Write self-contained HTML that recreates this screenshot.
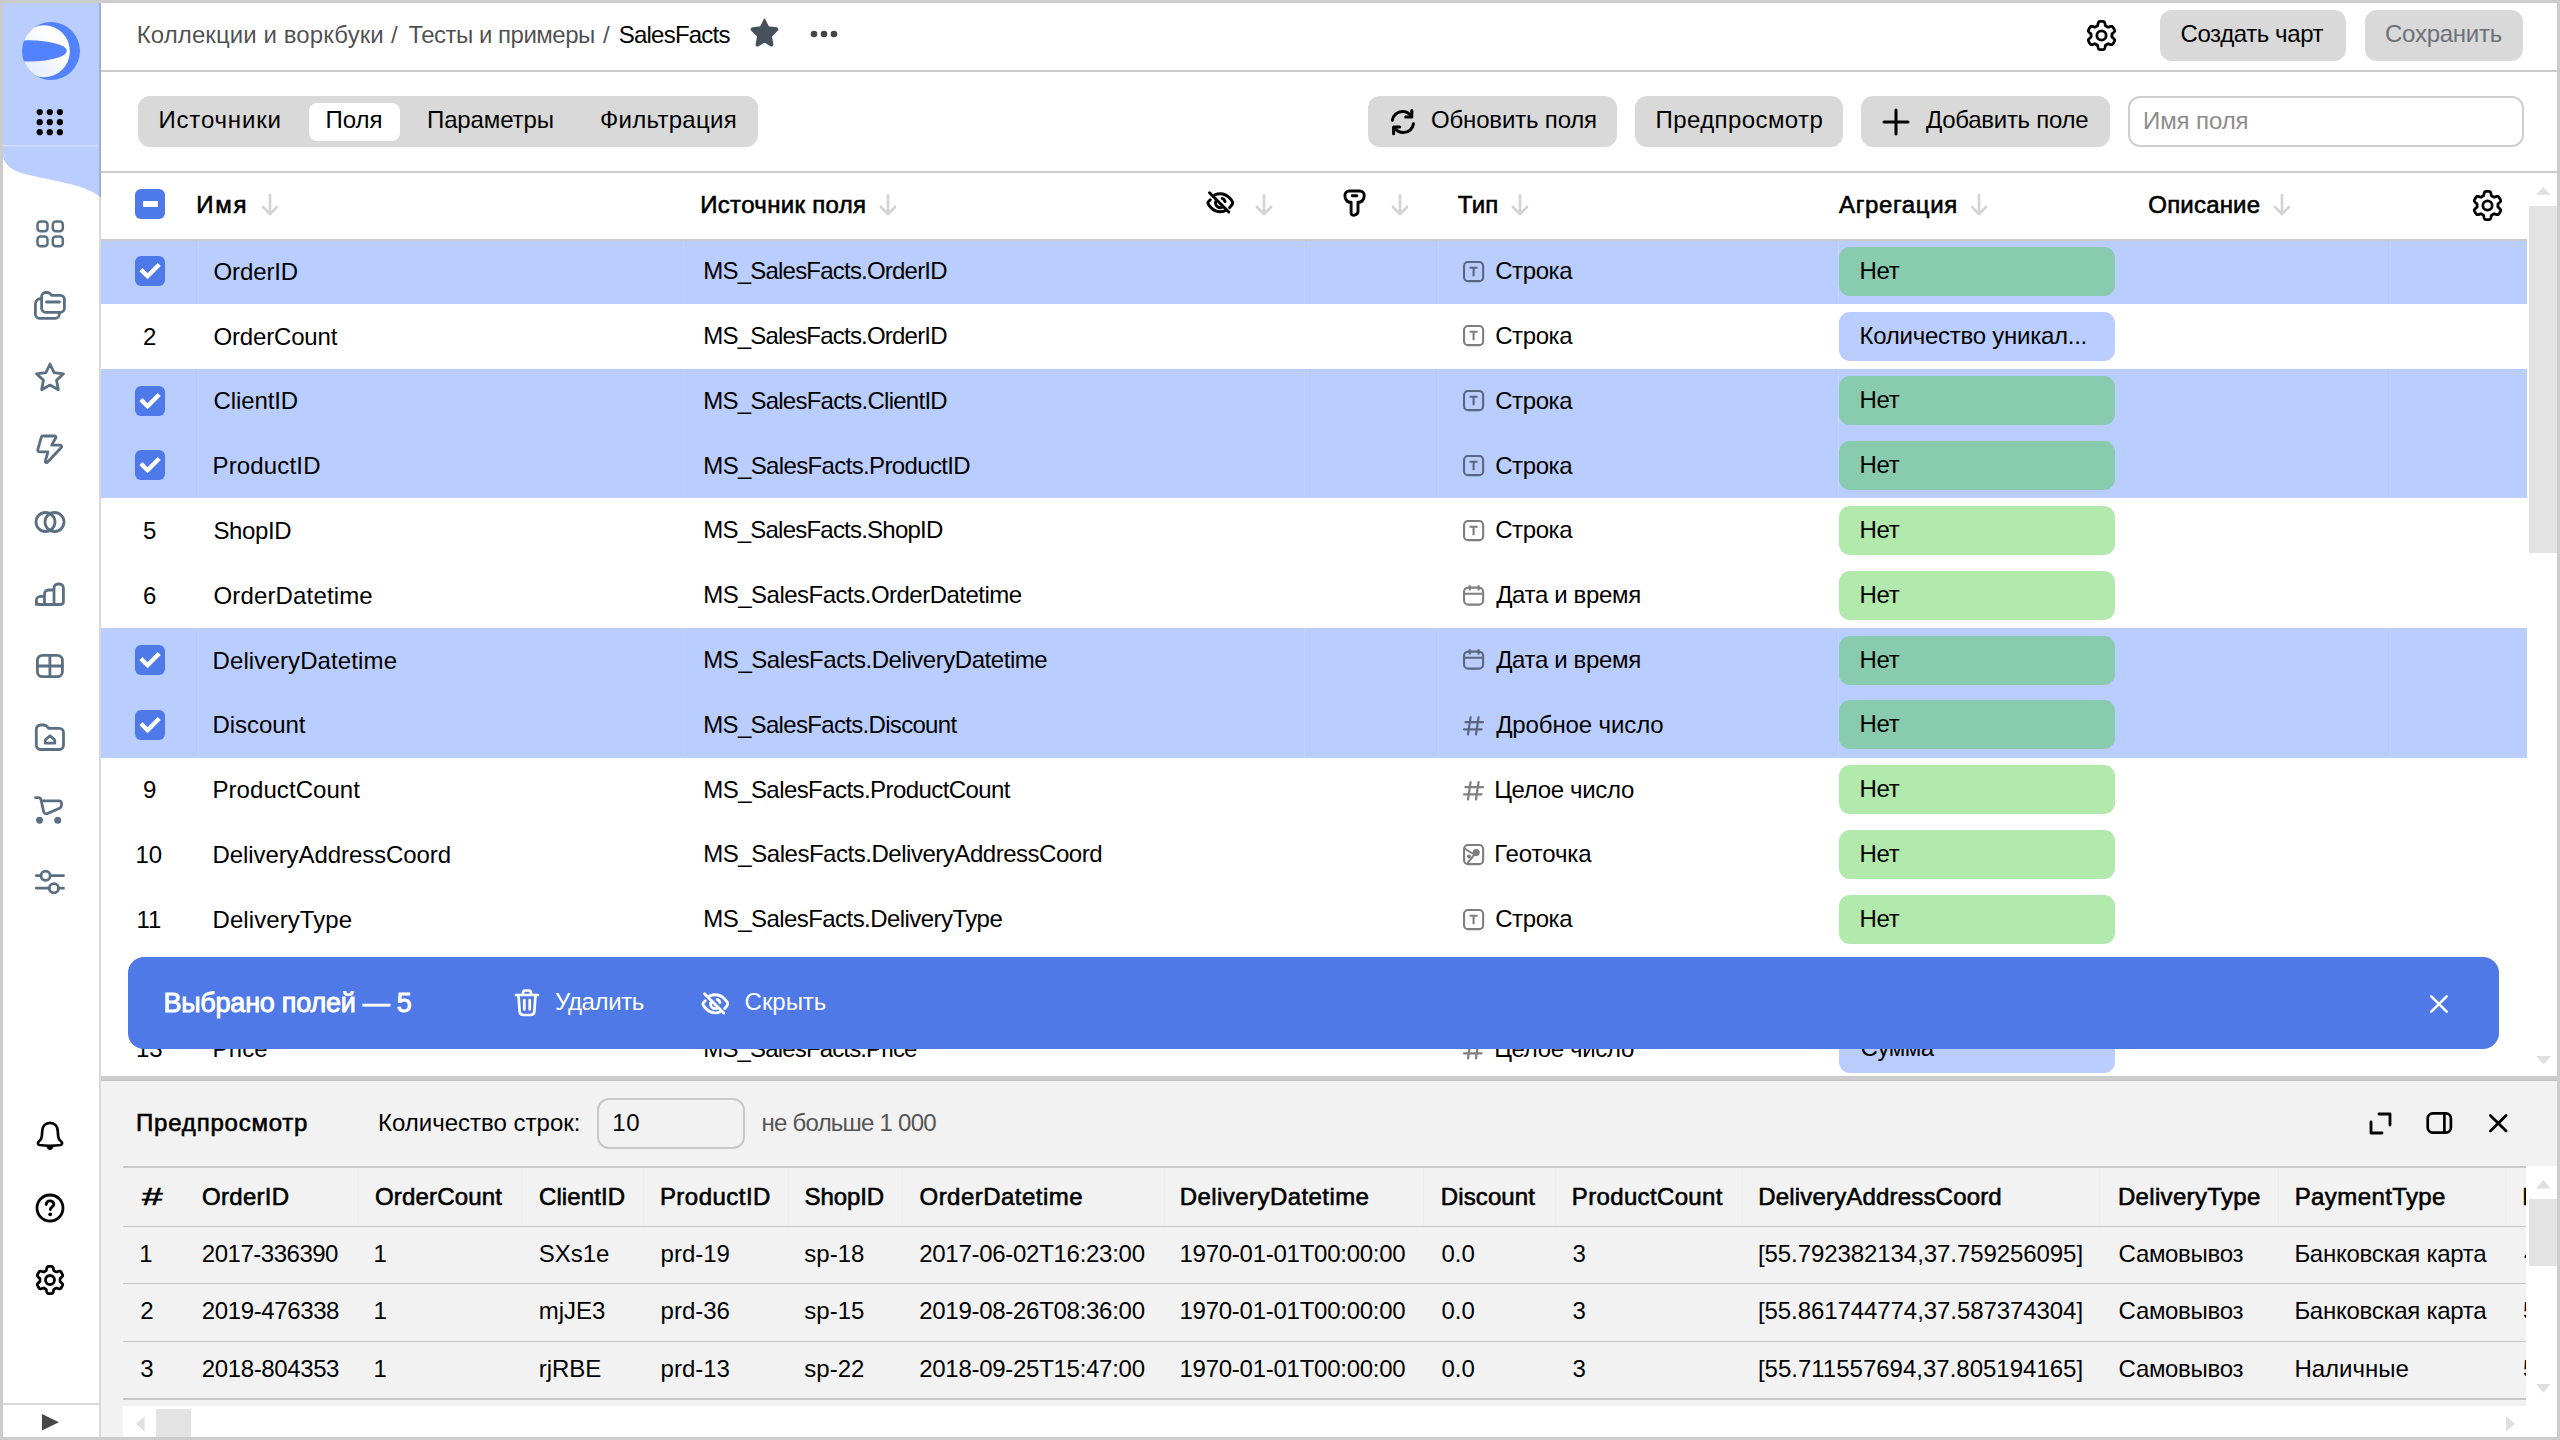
<!DOCTYPE html>
<html><head><meta charset="utf-8"><title>DataLens</title>
<style>
html,body{margin:0;padding:0;width:2560px;height:1440px;overflow:hidden;background:#fff;}
body{position:relative;font-family:"Liberation Sans",sans-serif;}
.a{position:absolute;}
.t{position:absolute;white-space:nowrap;}
svg.a{overflow:visible;}
@media (max-width: 2000px){html{zoom:0.5;}}
</style></head><body>
<svg class="a" style="left:3px;top:3px" width="98" height="200" viewBox="3 3 98 200"><path d="M3 3H101V197.5C93 191.5 84 187.5 72 184.5C58 181 42 178 28 174.8C14 171.8 5 166 3 156.5Z" fill="#bacdff"/><rect x="3" y="145" width="96" height="1.4" fill="#d3ddff"/></svg>
<svg class="a" style="left:22px;top:22px" width="58" height="58" viewBox="22.8 22.5 57.2 57.2"><defs><clipPath id="lc"><circle cx="51.4" cy="51.1" r="28.6"/></clipPath><linearGradient id="lg" x1="0" y1="1" x2="0.75" y2="0.35"><stop offset="0" stop-color="#dfe6fc"/><stop offset="1" stop-color="#ffffff"/></linearGradient></defs><circle cx="51.4" cy="51.1" r="28.6" fill="#5282ff"/><g clip-path="url(#lc)"><circle cx="44.3" cy="51.3" r="25.7" fill="url(#lg)"/><ellipse cx="30" cy="51" rx="37" ry="10.4" fill="#5282ff"/></g></svg>
<svg class="a" style="left:30px;top:102px;" width="40" height="40" viewBox="0 0 40 40"><g fill="#000"><circle cx="9.7" cy="10.1" r="3.1"/><circle cx="19.8" cy="10.1" r="3.1"/><circle cx="29.9" cy="10.1" r="3.1"/><circle cx="9.7" cy="20.2" r="3.1"/><circle cx="19.8" cy="20.2" r="3.1"/><circle cx="29.9" cy="20.2" r="3.1"/><circle cx="9.7" cy="30.2" r="3.1"/><circle cx="19.8" cy="30.2" r="3.1"/><circle cx="29.9" cy="30.2" r="3.1"/></g></svg>
<div class="a" style="left:99px;top:3px;width:2px;height:1434px;background:rgba(0,0,0,0.15);"></div>
<svg class="a" style="left:34px;top:217.5px;" width="32" height="32" viewBox="0 0 32 32"><g fill="none" stroke="#5b6f83" stroke-width="2.8" stroke-linecap="round" stroke-linejoin="round"><g stroke-width="2.5"><rect x="3.5" y="3.6" width="10" height="9.7" rx="3"/><rect x="18.8" y="3.6" width="10" height="9.7" rx="3"/><rect x="3.5" y="18.6" width="10" height="9.7" rx="3"/><rect x="18.8" y="18.6" width="10" height="9.7" rx="3"/></g></g></svg>
<svg class="a" style="left:34px;top:290px;" width="32" height="32" viewBox="0 0 32 32"><g fill="none" stroke="#5b6f83" stroke-width="2.8" stroke-linecap="round" stroke-linejoin="round"><path d="M7.6 8.3C4.2 8.5 1.4 10.5 1.4 14V24.3C1.4 26.5 3.2 28.3 5.4 28.3H21.3C23.5 28.3 25.3 26.5 25.3 24.3V22.3"/><path d="M7.6 19V6.5C7.6 4.3 9.4 2.5 11.6 2.5H13.5C14.6 2.5 15.6 3 16.3 3.9L17.5 5.3H26.4C28.6 5.3 30.4 7.1 30.4 9.3V18.3C30.4 20.5 28.6 22.3 26.4 22.3H11.6C9.4 22.3 7.6 20.5 7.6 18.3Z"/><path d="M12.5 12H25.5"/></g></svg>
<svg class="a" style="left:34px;top:360.5px;" width="32" height="32" viewBox="0 0 32 32"><g fill="none" stroke="#5b6f83" stroke-width="2.8" stroke-linecap="round" stroke-linejoin="round"><path d="M16.00 3.00L20.06 11.62L29.51 12.81L22.56 19.33L24.35 28.69L16.00 24.10L7.65 28.69L9.44 19.33L2.49 12.81L11.94 11.62Z"/></g></svg>
<svg class="a" style="left:34px;top:434px;" width="32" height="32" viewBox="0 0 32 32"><g fill="none" stroke="#5b6f83" stroke-width="2.8" stroke-linecap="round" stroke-linejoin="round"><path d="M8.6 2H20.6C21.6 2 22.2 3 21.8 3.9L17.6 11.2H26.3C27.5 11.2 28.1 12.6 27.3 13.5L13.4 28.2C12.5 29.1 11 28.3 11.3 27.1L13.9 17.8H5.4C4.2 17.8 3.4 16.6 3.8 15.5L7.4 2.9C7.6 2.4 8.1 2 8.6 2Z"/></g></svg>
<svg class="a" style="left:34px;top:505.7px;" width="32" height="32" viewBox="0 0 32 32"><g fill="none" stroke="#5b6f83" stroke-width="2.8" stroke-linecap="round" stroke-linejoin="round"><circle cx="11.5" cy="16" r="9.5"/><circle cx="20.5" cy="16" r="9.5"/></g></svg>
<svg class="a" style="left:34px;top:577.5px;" width="32" height="32" viewBox="0 0 32 32"><g fill="none" stroke="#5b6f83" stroke-width="2.8" stroke-linecap="round" stroke-linejoin="round"><path d="M2.4 26.5V22.2C2.4 20 4.2 18.3 6.4 18.3H10.5V26.5M10.5 26.5V15.9C10.5 13.7 12.3 12 14.5 12H20V26.5M20 26.5V9.9C20 7.7 21.8 6 24 6H25.4C27.6 6 29.4 7.7 29.4 9.9V23.5C29.4 25.2 28.1 26.5 26.4 26.5H5.4C3.7 26.5 2.4 25.2 2.4 23.5"/></g></svg>
<svg class="a" style="left:34px;top:649.6px;" width="32" height="32" viewBox="0 0 32 32"><g fill="none" stroke="#5b6f83" stroke-width="2.8" stroke-linecap="round" stroke-linejoin="round"><rect x="3.4" y="5.3" width="25" height="21.4" rx="5"/><path d="M15.9 5.3V26.7M3.4 16H28.4"/></g></svg>
<svg class="a" style="left:34px;top:721px;" width="32" height="32" viewBox="0 0 32 32"><g fill="none" stroke="#5b6f83" stroke-width="2.8" stroke-linecap="round" stroke-linejoin="round"><path d="M2.3 8.2C2.3 5.9 4.2 4 6.5 4H9.8C11 4 12.1 4.5 12.9 5.4L14.6 7.3H25.3C27.6 7.3 29.5 9.2 29.5 11.5V24.3C29.5 26.6 27.6 28.5 25.3 28.5H6.5C4.2 28.5 2.3 26.6 2.3 24.3Z"/><path d="M11.2 22.2V19.8C11.2 19.3 11.4 18.9 11.8 18.5L16 14.8L20.2 18.5C20.6 18.9 20.8 19.3 20.8 19.8V22.2Z"/></g></svg>
<svg class="a" style="left:34px;top:793.5px;" width="32" height="32" viewBox="0 0 32 32"><g fill="none" stroke="#5b6f83" stroke-width="2.8" stroke-linecap="round" stroke-linejoin="round"><path d="M1.5 3.6H4.5C5.7 3.6 6.7 4.5 7 5.7L9.6 17.5C10 19.3 11.9 20.3 13.6 19.5L25.5 14.2C26.6 13.7 27.5 12.6 27.5 11.3V9.2C27.5 7.9 26.4 6.8 25.1 6.8H7.6"/><circle cx="5.5" cy="26.3" r="2.1" fill="#5b6f83"/><circle cx="23.7" cy="26.3" r="2.1" fill="#5b6f83"/></g></svg>
<svg class="a" style="left:34px;top:865.7px;" width="32" height="32" viewBox="0 0 32 32"><g fill="none" stroke="#5b6f83" stroke-width="2.8" stroke-linecap="round" stroke-linejoin="round"><path d="M2.3 9.7H6.8M16.4 9.7H29.5M2.3 22.2H15.1M24.7 22.2H29.5"/><circle cx="11.6" cy="9.7" r="4.6"/><circle cx="19.9" cy="22.2" r="4.6"/></g></svg>
<svg class="a" style="left:36px;top:1120.5px;" width="28" height="30" viewBox="0 0 28 30"><path d="M14 1.8C9.6 1.8 6.7 5 6.3 9.3L5.8 15.3C5.6 17.6 4.4 19.4 2.6 20.8C1.4 21.8 1.9 23.7 3.4 24C7 24.6 10.5 24.8 14 24.8C17.5 24.8 21 24.6 24.6 24C26.1 23.7 26.6 21.8 25.4 20.8C23.6 19.4 22.4 17.6 22.2 15.3L21.7 9.3C21.3 5 18.4 1.8 14 1.8Z" fill="none" stroke="#000" stroke-width="2.7" stroke-linejoin="round"/><path d="M10.4 25.2C10.8 27.6 12.2 29 14 29C15.8 29 17.2 27.6 17.6 25.2Z" fill="#000"/></svg>
<svg class="a" style="left:35px;top:1193px;" width="30" height="30" viewBox="0 0 30 30"><circle cx="15" cy="15" r="13" fill="none" stroke="#000" stroke-width="2.8"/><path d="M11.2 11.6C11.2 9.4 12.9 7.9 15 7.9C17.2 7.9 18.8 9.4 18.8 11.4C18.8 13.7 15.3 14.2 15.3 16.6" fill="none" stroke="#000" stroke-width="2.9" stroke-linecap="round"/><circle cx="15.2" cy="21.3" r="1.9" fill="#000"/></svg>
<svg class="a" style="left:34.7px;top:1265px;" width="30" height="30" viewBox="0 0 30 30"><path d="M25.06,15.00L25.06,15.18L25.06,15.35L25.05,15.53L25.04,15.70L25.03,15.88L25.01,16.05L25.03,16.23L25.12,16.42L25.27,16.63L25.49,16.85L25.75,17.09L26.04,17.35L26.35,17.62L26.66,17.91L26.96,18.20L27.22,18.51L27.45,18.81L27.61,19.10L27.71,19.38L27.74,19.64L27.70,19.87L27.61,20.09L27.52,20.31L27.42,20.53L27.33,20.75L27.22,20.96L27.12,21.17L27.01,21.38L26.89,21.59L26.78,21.80L26.66,22.00L26.53,22.21L26.41,22.41L26.27,22.61L26.14,22.80L26.00,22.99L25.86,23.18L25.72,23.37L25.57,23.56L25.39,23.72L25.15,23.82L24.86,23.87L24.52,23.88L24.15,23.83L23.75,23.75L23.35,23.64L22.94,23.52L22.55,23.39L22.18,23.26L21.85,23.16L21.55,23.08L21.29,23.05L21.08,23.07L20.92,23.14L20.77,23.24L20.63,23.34L20.48,23.44L20.33,23.53L20.18,23.63L20.03,23.72L19.88,23.80L19.72,23.89L19.57,23.97L19.41,24.05L19.25,24.12L19.09,24.19L18.95,24.30L18.83,24.47L18.73,24.71L18.64,25.01L18.56,25.35L18.49,25.73L18.41,26.14L18.31,26.55L18.20,26.96L18.08,27.34L17.93,27.68L17.76,27.97L17.57,28.20L17.35,28.36L17.13,28.43L16.89,28.47L16.66,28.50L16.42,28.53L16.19,28.55L15.95,28.57L15.71,28.58L15.47,28.59L15.24,28.60L15.00,28.60L14.76,28.60L14.53,28.59L14.29,28.58L14.05,28.57L13.81,28.55L13.58,28.53L13.34,28.50L13.11,28.47L12.87,28.43L12.65,28.36L12.43,28.20L12.24,27.97L12.07,27.68L11.92,27.34L11.80,26.96L11.69,26.55L11.59,26.14L11.51,25.73L11.44,25.35L11.36,25.01L11.27,24.71L11.17,24.47L11.05,24.30L10.91,24.19L10.75,24.12L10.59,24.05L10.43,23.97L10.28,23.89L10.12,23.80L9.97,23.72L9.82,23.63L9.67,23.53L9.52,23.44L9.37,23.34L9.23,23.24L9.08,23.14L8.92,23.07L8.71,23.05L8.45,23.08L8.15,23.16L7.82,23.26L7.45,23.39L7.06,23.52L6.65,23.64L6.25,23.75L5.85,23.83L5.48,23.88L5.14,23.87L4.85,23.82L4.61,23.72L4.43,23.56L4.28,23.37L4.14,23.18L4.00,22.99L3.86,22.80L3.73,22.61L3.59,22.41L3.47,22.21L3.34,22.00L3.22,21.80L3.11,21.59L2.99,21.38L2.88,21.17L2.78,20.96L2.67,20.75L2.58,20.53L2.48,20.31L2.39,20.09L2.30,19.87L2.26,19.64L2.29,19.38L2.39,19.10L2.55,18.81L2.78,18.51L3.04,18.20L3.34,17.91L3.65,17.62L3.96,17.35L4.25,17.09L4.51,16.85L4.73,16.63L4.88,16.42L4.97,16.23L4.99,16.05L4.97,15.88L4.96,15.70L4.95,15.53L4.94,15.35L4.94,15.18L4.94,15.00L4.94,14.82L4.94,14.65L4.95,14.47L4.96,14.30L4.97,14.12L4.99,13.95L4.97,13.77L4.88,13.58L4.73,13.37L4.51,13.15L4.25,12.91L3.96,12.65L3.65,12.38L3.34,12.09L3.04,11.80L2.78,11.49L2.55,11.19L2.39,10.90L2.29,10.62L2.26,10.36L2.30,10.13L2.39,9.91L2.48,9.69L2.58,9.47L2.67,9.25L2.78,9.04L2.88,8.83L2.99,8.62L3.11,8.41L3.22,8.20L3.34,8.00L3.47,7.79L3.59,7.59L3.73,7.39L3.86,7.20L4.00,7.01L4.14,6.82L4.28,6.63L4.43,6.44L4.61,6.28L4.85,6.18L5.14,6.13L5.48,6.12L5.85,6.17L6.25,6.25L6.65,6.36L7.06,6.48L7.45,6.61L7.82,6.74L8.15,6.84L8.45,6.92L8.71,6.95L8.92,6.93L9.08,6.86L9.23,6.76L9.37,6.66L9.52,6.56L9.67,6.47L9.82,6.37L9.97,6.28L10.12,6.20L10.28,6.11L10.43,6.03L10.59,5.95L10.75,5.88L10.91,5.81L11.05,5.70L11.17,5.53L11.27,5.29L11.36,4.99L11.44,4.65L11.51,4.27L11.59,3.86L11.69,3.45L11.80,3.04L11.92,2.66L12.07,2.32L12.24,2.03L12.43,1.80L12.65,1.64L12.87,1.57L13.11,1.53L13.34,1.50L13.58,1.47L13.81,1.45L14.05,1.43L14.29,1.42L14.53,1.41L14.76,1.40L15.00,1.40L15.24,1.40L15.47,1.41L15.71,1.42L15.95,1.43L16.19,1.45L16.42,1.47L16.66,1.50L16.89,1.53L17.13,1.57L17.35,1.64L17.57,1.80L17.76,2.03L17.93,2.32L18.08,2.66L18.20,3.04L18.31,3.45L18.41,3.86L18.49,4.27L18.56,4.65L18.64,4.99L18.73,5.29L18.83,5.53L18.95,5.70L19.09,5.81L19.25,5.88L19.41,5.95L19.57,6.03L19.72,6.11L19.88,6.20L20.03,6.28L20.18,6.37L20.33,6.47L20.48,6.56L20.63,6.66L20.77,6.76L20.92,6.86L21.08,6.93L21.29,6.95L21.55,6.92L21.85,6.84L22.18,6.74L22.55,6.61L22.94,6.48L23.35,6.36L23.75,6.25L24.15,6.17L24.52,6.12L24.86,6.13L25.15,6.18L25.39,6.28L25.57,6.44L25.72,6.63L25.86,6.82L26.00,7.01L26.14,7.20L26.27,7.39L26.41,7.59L26.53,7.79L26.66,8.00L26.78,8.20L26.89,8.41L27.01,8.62L27.12,8.83L27.22,9.04L27.33,9.25L27.42,9.47L27.52,9.69L27.61,9.91L27.70,10.13L27.74,10.36L27.71,10.62L27.61,10.90L27.45,11.19L27.22,11.49L26.96,11.80L26.66,12.09L26.35,12.38L26.04,12.65L25.75,12.91L25.49,13.15L25.27,13.37L25.12,13.58L25.03,13.77L25.01,13.95L25.03,14.12L25.04,14.30L25.05,14.47L25.06,14.65L25.06,14.82Z" fill="none" stroke="#000" stroke-width="2.8" stroke-linejoin="round"/><circle cx="15" cy="15" r="4.5" fill="none" stroke="#000" stroke-width="2.8"/></svg>
<div class="a" style="left:3px;top:1403px;width:96px;height:2px;background:rgba(0,0,0,0.15);"></div>
<svg class="a" style="left:41.7px;top:1413.6px;" width="16.9" height="16.4" viewBox="0 0 16.9 16.4"><path d="M0 0 L16.9 8.2 L0 16.4 Z" fill="#474747"/></svg>
<div class="a" style="left:101px;top:70px;width:2456px;height:2px;background:#cbcbcb;"></div>
<div class="t" style="left:136.75px;top:22.68px;font-size:24px;line-height:24px;color:rgba(0,0,0,0.7);letter-spacing:0.09px;">Коллекции и воркбуки</div>
<div class="t" style="left:391px;top:22.68px;font-size:24px;line-height:24px;color:rgba(0,0,0,0.7);">/</div>
<div class="t" style="left:408.4px;top:22.68px;font-size:24px;line-height:24px;color:rgba(0,0,0,0.7);letter-spacing:-0.5px;">Тесты и примеры</div>
<div class="t" style="left:603px;top:22.68px;font-size:24px;line-height:24px;color:rgba(0,0,0,0.7);">/</div>
<div class="t" style="left:618.8px;top:22.68px;font-size:24px;line-height:24px;color:#000;letter-spacing:-0.79px;">SalesFacts</div>
<svg class="a" style="left:749px;top:17.3px;" width="31" height="30" viewBox="0 0 30 29"><path d="M15 2.2L18.6 9.6L26.6 10.7C27.6 10.9 28 12.1 27.3 12.8L21.4 18.5L22.9 26.4C23.1 27.4 22 28.2 21.1 27.7L15 23.9L8.9 27.7C8 28.2 6.9 27.4 7.1 26.4L8.6 18.5L2.7 12.8C2 12.1 2.4 10.9 3.4 10.7L11.4 9.6Z" fill="#46515d" stroke="#46515d" stroke-width="1.5" stroke-linejoin="round"/></svg>
<svg class="a" style="left:808px;top:29px;" width="32" height="10" viewBox="0 0 32 10"><g fill="#444"><circle cx="6" cy="5" r="3.3"/><circle cx="16" cy="5" r="3.3"/><circle cx="26" cy="5" r="3.3"/></g></svg>
<svg class="a" style="left:2085.5px;top:19.8px;" width="31" height="31" viewBox="0 0 31 31"><path d="M25.93,15.50L25.93,15.68L25.93,15.86L25.92,16.05L25.91,16.23L25.89,16.41L25.88,16.59L25.90,16.78L25.99,16.97L26.15,17.19L26.37,17.42L26.64,17.67L26.94,17.93L27.27,18.22L27.59,18.51L27.90,18.82L28.17,19.13L28.40,19.45L28.58,19.75L28.68,20.04L28.71,20.31L28.66,20.55L28.57,20.78L28.48,21.01L28.38,21.23L28.28,21.46L28.17,21.68L28.06,21.90L27.95,22.12L27.83,22.34L27.71,22.55L27.59,22.76L27.46,22.97L27.33,23.18L27.19,23.38L27.05,23.59L26.91,23.79L26.76,23.99L26.61,24.18L26.46,24.37L26.27,24.54L26.02,24.65L25.72,24.70L25.37,24.70L24.98,24.66L24.57,24.57L24.15,24.46L23.74,24.33L23.33,24.20L22.95,24.07L22.60,23.96L22.29,23.88L22.02,23.85L21.80,23.86L21.63,23.94L21.48,24.05L21.33,24.15L21.18,24.25L21.03,24.35L20.87,24.44L20.72,24.54L20.56,24.63L20.40,24.71L20.24,24.80L20.07,24.88L19.91,24.96L19.74,25.03L19.59,25.14L19.47,25.32L19.36,25.57L19.28,25.87L19.20,26.23L19.12,26.63L19.03,27.05L18.93,27.48L18.82,27.90L18.69,28.29L18.54,28.65L18.36,28.95L18.16,29.19L17.94,29.35L17.71,29.43L17.46,29.46L17.22,29.49L16.97,29.52L16.73,29.55L16.48,29.57L16.24,29.58L15.99,29.59L15.75,29.60L15.50,29.60L15.25,29.60L15.01,29.59L14.76,29.58L14.52,29.57L14.27,29.55L14.03,29.52L13.78,29.49L13.54,29.46L13.29,29.43L13.06,29.35L12.84,29.19L12.64,28.95L12.46,28.65L12.31,28.29L12.18,27.90L12.07,27.48L11.97,27.05L11.88,26.63L11.80,26.23L11.72,25.87L11.64,25.57L11.53,25.32L11.41,25.14L11.26,25.03L11.09,24.96L10.93,24.88L10.76,24.80L10.60,24.71L10.44,24.63L10.28,24.54L10.13,24.44L9.97,24.35L9.82,24.25L9.67,24.15L9.52,24.05L9.37,23.94L9.20,23.86L8.98,23.85L8.71,23.88L8.40,23.96L8.05,24.07L7.67,24.20L7.26,24.33L6.85,24.46L6.43,24.57L6.02,24.66L5.63,24.70L5.28,24.70L4.98,24.65L4.73,24.54L4.54,24.37L4.39,24.18L4.24,23.99L4.09,23.79L3.95,23.59L3.81,23.38L3.67,23.18L3.54,22.97L3.41,22.76L3.29,22.55L3.17,22.34L3.05,22.12L2.94,21.90L2.83,21.68L2.72,21.46L2.62,21.23L2.52,21.01L2.43,20.78L2.34,20.55L2.29,20.31L2.32,20.04L2.42,19.75L2.60,19.45L2.83,19.13L3.10,18.82L3.41,18.51L3.73,18.22L4.06,17.93L4.36,17.67L4.63,17.42L4.85,17.19L5.01,16.97L5.10,16.78L5.12,16.59L5.11,16.41L5.09,16.23L5.08,16.05L5.07,15.86L5.07,15.68L5.07,15.50L5.07,15.32L5.07,15.14L5.08,14.95L5.09,14.77L5.11,14.59L5.12,14.41L5.10,14.22L5.01,14.03L4.85,13.81L4.63,13.58L4.36,13.33L4.06,13.07L3.73,12.78L3.41,12.49L3.10,12.18L2.83,11.87L2.60,11.55L2.42,11.25L2.32,10.96L2.29,10.69L2.34,10.45L2.43,10.22L2.52,9.99L2.62,9.77L2.72,9.54L2.83,9.32L2.94,9.10L3.05,8.88L3.17,8.66L3.29,8.45L3.41,8.24L3.54,8.03L3.67,7.82L3.81,7.62L3.95,7.41L4.09,7.21L4.24,7.01L4.39,6.82L4.54,6.63L4.73,6.46L4.98,6.35L5.28,6.30L5.63,6.30L6.02,6.34L6.43,6.43L6.85,6.54L7.26,6.67L7.67,6.80L8.05,6.93L8.40,7.04L8.71,7.12L8.98,7.15L9.20,7.14L9.37,7.06L9.52,6.95L9.67,6.85L9.82,6.75L9.97,6.65L10.13,6.56L10.28,6.46L10.44,6.37L10.60,6.29L10.76,6.20L10.93,6.12L11.09,6.04L11.26,5.97L11.41,5.86L11.53,5.68L11.64,5.43L11.72,5.13L11.80,4.77L11.88,4.37L11.97,3.95L12.07,3.52L12.18,3.10L12.31,2.71L12.46,2.35L12.64,2.05L12.84,1.81L13.06,1.65L13.29,1.57L13.54,1.54L13.78,1.51L14.03,1.48L14.27,1.45L14.52,1.43L14.76,1.42L15.01,1.41L15.25,1.40L15.50,1.40L15.75,1.40L15.99,1.41L16.24,1.42L16.48,1.43L16.73,1.45L16.97,1.48L17.22,1.51L17.46,1.54L17.71,1.57L17.94,1.65L18.16,1.81L18.36,2.05L18.54,2.35L18.69,2.71L18.82,3.10L18.93,3.52L19.03,3.95L19.12,4.37L19.20,4.77L19.28,5.13L19.36,5.43L19.47,5.68L19.59,5.86L19.74,5.97L19.91,6.04L20.07,6.12L20.24,6.20L20.40,6.29L20.56,6.37L20.72,6.46L20.87,6.56L21.03,6.65L21.18,6.75L21.33,6.85L21.48,6.95L21.63,7.06L21.80,7.14L22.02,7.15L22.29,7.12L22.60,7.04L22.95,6.93L23.33,6.80L23.74,6.67L24.15,6.54L24.57,6.43L24.98,6.34L25.37,6.30L25.72,6.30L26.02,6.35L26.27,6.46L26.46,6.63L26.61,6.82L26.76,7.01L26.91,7.21L27.05,7.41L27.19,7.62L27.33,7.82L27.46,8.03L27.59,8.24L27.71,8.45L27.83,8.66L27.95,8.88L28.06,9.10L28.17,9.32L28.28,9.54L28.38,9.77L28.48,9.99L28.57,10.22L28.66,10.45L28.71,10.69L28.68,10.96L28.58,11.25L28.40,11.55L28.17,11.87L27.90,12.18L27.59,12.49L27.27,12.78L26.94,13.07L26.64,13.33L26.37,13.58L26.15,13.81L25.99,14.03L25.90,14.22L25.88,14.41L25.89,14.59L25.91,14.77L25.92,14.95L25.93,15.14L25.93,15.32Z" fill="none" stroke="#000" stroke-width="2.8" stroke-linejoin="round"/><circle cx="15.5" cy="15.5" r="4.65" fill="none" stroke="#000" stroke-width="2.8"/></svg>
<div class="a" style="left:2160px;top:10px;width:185.5px;height:50.5px;background:#d9d9d9;border-radius:12px;"></div>
<div class="t" style="left:2180.5px;top:21.68px;font-size:24px;line-height:24px;color:#000;letter-spacing:-0.41px;">Создать чарт</div>
<div class="a" style="left:2365px;top:10px;width:158px;height:50.5px;background:#d9d9d9;border-radius:12px;"></div>
<div class="t" style="left:2385px;top:21.68px;font-size:24px;line-height:24px;color:#6e7177;letter-spacing:-0.25px;">Сохранить</div>
<div class="a" style="left:138px;top:96px;width:620px;height:51px;background:#d9d9d9;border-radius:12px;"></div>
<div class="a" style="left:309px;top:102.5px;width:91px;height:38px;background:#fff;border-radius:8px;"></div>
<div class="t" style="left:158.5px;top:107.68px;font-size:24px;line-height:24px;color:#000;letter-spacing:0.81px;">Источники</div>
<div class="t" style="left:325.5px;top:107.68px;font-size:24px;line-height:24px;color:#000;">Поля</div>
<div class="t" style="left:427px;top:107.68px;font-size:24px;line-height:24px;color:#000;letter-spacing:-0.12px;">Параметры</div>
<div class="t" style="left:600px;top:107.68px;font-size:24px;line-height:24px;color:#000;letter-spacing:0.28px;">Фильтрация</div>
<div class="a" style="left:1368px;top:96px;width:249.3px;height:51px;background:#d9d9d9;border-radius:12px;"></div>
<svg class="a" style="left:1390px;top:108.5px;" width="27" height="26" viewBox="0 0 27 26"><g fill="none" stroke="#000" stroke-width="3" stroke-linecap="round" stroke-linejoin="round"><path d="M2.3 11.3C3 6.2 7.2 2.6 12.5 2.6C16.2 2.6 19.2 4.4 21.3 7.3"/><path d="M21.8 1.5V7.9H15.7"/><path d="M23.5 14.8C22.8 19.8 18.6 23.5 13.3 23.5C9.6 23.5 6.6 21.7 4.5 18.8"/><path d="M3.6 24.7V18.1H9.7"/></g></svg>
<div class="t" style="left:1431px;top:107.68px;font-size:24px;line-height:24px;color:#000;letter-spacing:-0.17px;">Обновить поля</div>
<div class="a" style="left:1635.4px;top:96px;width:207.4px;height:51px;background:#d9d9d9;border-radius:12px;"></div>
<div class="t" style="left:1655.6px;top:107.68px;font-size:24px;line-height:24px;color:#000;letter-spacing:0.4px;">Предпросмотр</div>
<div class="a" style="left:1861px;top:96px;width:249px;height:51px;background:#d9d9d9;border-radius:12px;"></div>
<svg class="a" style="left:1882px;top:108px;" width="28" height="28" viewBox="0 0 28 28"><path d="M14 2V26M2 14H26" stroke="#000" stroke-width="3" stroke-linecap="round"/></svg>
<div class="t" style="left:1926px;top:107.68px;font-size:24px;line-height:24px;color:#000;letter-spacing:-0.28px;">Добавить поле</div>
<div class="a" style="left:2128px;top:96px;width:396px;height:51px;background:#fff;border-radius:12px;border:2px solid #cfcfcf;box-sizing:border-box;"></div>
<div class="t" style="left:2143px;top:108.68px;font-size:24px;line-height:24px;color:#8c8c8c;letter-spacing:-0.09px;">Имя поля</div>
<div class="a" style="left:101px;top:171px;width:2456px;height:2px;background:#cbcbcb;"></div>
<div class="a" style="left:135px;top:189px;width:30px;height:30px;background:#4e79e8;border-radius:6px;"></div>
<div class="a" style="left:142.5px;top:201px;width:15px;height:6px;background:#fff;"></div>
<div class="t" style="left:196.3px;top:192.68px;font-size:24px;line-height:24px;color:#000;-webkit-text-stroke:0.6px #000;letter-spacing:1.7px;">Имя</div>
<svg class="a" style="left:260.5px;top:193px;" width="18" height="24" viewBox="0 0 18 24"><path d="M9 2V21M2 14L9 21L16 14" fill="none" stroke="#d3d3d3" stroke-width="2.6" stroke-linecap="round" stroke-linejoin="round"/></svg>
<div class="t" style="left:700.2px;top:192.68px;font-size:24px;line-height:24px;color:#000;-webkit-text-stroke:0.6px #000;letter-spacing:0.33px;">Источник поля</div>
<svg class="a" style="left:879px;top:193px;" width="18" height="24" viewBox="0 0 18 24"><path d="M9 2V21M2 14L9 21L16 14" fill="none" stroke="#d3d3d3" stroke-width="2.6" stroke-linecap="round" stroke-linejoin="round"/></svg>
<svg class="a" style="left:1206px;top:191.2px;" width="29" height="23.5" viewBox="0 0 29 23"><path d="M4.2 8.6C2.7 10 1.9 11.2 1.9 11.6C1.9 13 6.6 20.6 14.3 20.6C16 20.6 17.5 20.3 18.8 19.7M8.9 3.5C10.5 2.8 12.3 2.5 14.3 2.5C22 2.5 26.7 10.1 26.7 11.6C26.7 12.3 25.7 14.2 23.7 16.3M10.6 9.3C9.9 10 9.5 10.8 9.5 11.6C9.5 14.2 11.6 16.4 14.3 16.4C15.3 16.4 16.2 16.1 16.9 15.6M16.2 7.2C17.6 7.8 18.6 9 19 10.3M3.5 1.5L22.8 20.8" fill="none" stroke="#000" stroke-width="3" stroke-linecap="round" stroke-linejoin="round"/></svg>
<svg class="a" style="left:1255px;top:193px;" width="18" height="24" viewBox="0 0 18 24"><path d="M9 2V21M2 14L9 21L16 14" fill="none" stroke="#d3d3d3" stroke-width="2.6" stroke-linecap="round" stroke-linejoin="round"/></svg>
<svg class="a" style="left:1343px;top:189px;" width="23" height="28.5" viewBox="0 0 23 28.5"><path d="M6.2 2H16.8C19.3 2 21.2 4 21.2 6.5C21.2 7.6 21 8.6 20.6 9.6C19.8 11.5 18.3 13.3 16 13.3H15V22.5C15 24.5 13.9 25.5 11.5 26.2C10 26.7 8.1 25.9 8.1 24.3V13.3H7.1C4.7 13.3 3.3 11.5 2.5 9.6C2.1 8.6 1.9 7.6 1.9 6.5C1.9 4 3.8 2 6.2 2Z" fill="none" stroke="#000" stroke-width="2.9" stroke-linejoin="round"/><path d="M9.3 6.7H13.8" stroke="#000" stroke-width="2.9" stroke-linecap="round"/></svg>
<svg class="a" style="left:1391px;top:193px;" width="18" height="24" viewBox="0 0 18 24"><path d="M9 2V21M2 14L9 21L16 14" fill="none" stroke="#d3d3d3" stroke-width="2.6" stroke-linecap="round" stroke-linejoin="round"/></svg>
<div class="t" style="left:1457.8px;top:192.68px;font-size:24px;line-height:24px;color:#000;-webkit-text-stroke:0.6px #000;letter-spacing:0.25px;">Тип</div>
<svg class="a" style="left:1511px;top:193px;" width="18" height="24" viewBox="0 0 18 24"><path d="M9 2V21M2 14L9 21L16 14" fill="none" stroke="#d3d3d3" stroke-width="2.6" stroke-linecap="round" stroke-linejoin="round"/></svg>
<div class="t" style="left:1839.1px;top:192.68px;font-size:24px;line-height:24px;color:#000;-webkit-text-stroke:0.6px #000;letter-spacing:0.61px;">Агрегация</div>
<svg class="a" style="left:1970px;top:193px;" width="18" height="24" viewBox="0 0 18 24"><path d="M9 2V21M2 14L9 21L16 14" fill="none" stroke="#d3d3d3" stroke-width="2.6" stroke-linecap="round" stroke-linejoin="round"/></svg>
<div class="t" style="left:2148.3px;top:192.68px;font-size:24px;line-height:24px;color:#000;-webkit-text-stroke:0.6px #000;letter-spacing:0.19px;">Описание</div>
<svg class="a" style="left:2272.5px;top:193px;" width="18" height="24" viewBox="0 0 18 24"><path d="M9 2V21M2 14L9 21L16 14" fill="none" stroke="#d3d3d3" stroke-width="2.6" stroke-linecap="round" stroke-linejoin="round"/></svg>
<svg class="a" style="left:2471.5px;top:189.5px;" width="31" height="31" viewBox="0 0 31 31"><path d="M25.93,15.50L25.93,15.68L25.93,15.86L25.92,16.05L25.91,16.23L25.89,16.41L25.88,16.59L25.90,16.78L25.99,16.97L26.15,17.19L26.37,17.42L26.64,17.67L26.94,17.93L27.27,18.22L27.59,18.51L27.90,18.82L28.17,19.13L28.40,19.45L28.58,19.75L28.68,20.04L28.71,20.31L28.66,20.55L28.57,20.78L28.48,21.01L28.38,21.23L28.28,21.46L28.17,21.68L28.06,21.90L27.95,22.12L27.83,22.34L27.71,22.55L27.59,22.76L27.46,22.97L27.33,23.18L27.19,23.38L27.05,23.59L26.91,23.79L26.76,23.99L26.61,24.18L26.46,24.37L26.27,24.54L26.02,24.65L25.72,24.70L25.37,24.70L24.98,24.66L24.57,24.57L24.15,24.46L23.74,24.33L23.33,24.20L22.95,24.07L22.60,23.96L22.29,23.88L22.02,23.85L21.80,23.86L21.63,23.94L21.48,24.05L21.33,24.15L21.18,24.25L21.03,24.35L20.87,24.44L20.72,24.54L20.56,24.63L20.40,24.71L20.24,24.80L20.07,24.88L19.91,24.96L19.74,25.03L19.59,25.14L19.47,25.32L19.36,25.57L19.28,25.87L19.20,26.23L19.12,26.63L19.03,27.05L18.93,27.48L18.82,27.90L18.69,28.29L18.54,28.65L18.36,28.95L18.16,29.19L17.94,29.35L17.71,29.43L17.46,29.46L17.22,29.49L16.97,29.52L16.73,29.55L16.48,29.57L16.24,29.58L15.99,29.59L15.75,29.60L15.50,29.60L15.25,29.60L15.01,29.59L14.76,29.58L14.52,29.57L14.27,29.55L14.03,29.52L13.78,29.49L13.54,29.46L13.29,29.43L13.06,29.35L12.84,29.19L12.64,28.95L12.46,28.65L12.31,28.29L12.18,27.90L12.07,27.48L11.97,27.05L11.88,26.63L11.80,26.23L11.72,25.87L11.64,25.57L11.53,25.32L11.41,25.14L11.26,25.03L11.09,24.96L10.93,24.88L10.76,24.80L10.60,24.71L10.44,24.63L10.28,24.54L10.13,24.44L9.97,24.35L9.82,24.25L9.67,24.15L9.52,24.05L9.37,23.94L9.20,23.86L8.98,23.85L8.71,23.88L8.40,23.96L8.05,24.07L7.67,24.20L7.26,24.33L6.85,24.46L6.43,24.57L6.02,24.66L5.63,24.70L5.28,24.70L4.98,24.65L4.73,24.54L4.54,24.37L4.39,24.18L4.24,23.99L4.09,23.79L3.95,23.59L3.81,23.38L3.67,23.18L3.54,22.97L3.41,22.76L3.29,22.55L3.17,22.34L3.05,22.12L2.94,21.90L2.83,21.68L2.72,21.46L2.62,21.23L2.52,21.01L2.43,20.78L2.34,20.55L2.29,20.31L2.32,20.04L2.42,19.75L2.60,19.45L2.83,19.13L3.10,18.82L3.41,18.51L3.73,18.22L4.06,17.93L4.36,17.67L4.63,17.42L4.85,17.19L5.01,16.97L5.10,16.78L5.12,16.59L5.11,16.41L5.09,16.23L5.08,16.05L5.07,15.86L5.07,15.68L5.07,15.50L5.07,15.32L5.07,15.14L5.08,14.95L5.09,14.77L5.11,14.59L5.12,14.41L5.10,14.22L5.01,14.03L4.85,13.81L4.63,13.58L4.36,13.33L4.06,13.07L3.73,12.78L3.41,12.49L3.10,12.18L2.83,11.87L2.60,11.55L2.42,11.25L2.32,10.96L2.29,10.69L2.34,10.45L2.43,10.22L2.52,9.99L2.62,9.77L2.72,9.54L2.83,9.32L2.94,9.10L3.05,8.88L3.17,8.66L3.29,8.45L3.41,8.24L3.54,8.03L3.67,7.82L3.81,7.62L3.95,7.41L4.09,7.21L4.24,7.01L4.39,6.82L4.54,6.63L4.73,6.46L4.98,6.35L5.28,6.30L5.63,6.30L6.02,6.34L6.43,6.43L6.85,6.54L7.26,6.67L7.67,6.80L8.05,6.93L8.40,7.04L8.71,7.12L8.98,7.15L9.20,7.14L9.37,7.06L9.52,6.95L9.67,6.85L9.82,6.75L9.97,6.65L10.13,6.56L10.28,6.46L10.44,6.37L10.60,6.29L10.76,6.20L10.93,6.12L11.09,6.04L11.26,5.97L11.41,5.86L11.53,5.68L11.64,5.43L11.72,5.13L11.80,4.77L11.88,4.37L11.97,3.95L12.07,3.52L12.18,3.10L12.31,2.71L12.46,2.35L12.64,2.05L12.84,1.81L13.06,1.65L13.29,1.57L13.54,1.54L13.78,1.51L14.03,1.48L14.27,1.45L14.52,1.43L14.76,1.42L15.01,1.41L15.25,1.40L15.50,1.40L15.75,1.40L15.99,1.41L16.24,1.42L16.48,1.43L16.73,1.45L16.97,1.48L17.22,1.51L17.46,1.54L17.71,1.57L17.94,1.65L18.16,1.81L18.36,2.05L18.54,2.35L18.69,2.71L18.82,3.10L18.93,3.52L19.03,3.95L19.12,4.37L19.20,4.77L19.28,5.13L19.36,5.43L19.47,5.68L19.59,5.86L19.74,5.97L19.91,6.04L20.07,6.12L20.24,6.20L20.40,6.29L20.56,6.37L20.72,6.46L20.87,6.56L21.03,6.65L21.18,6.75L21.33,6.85L21.48,6.95L21.63,7.06L21.80,7.14L22.02,7.15L22.29,7.12L22.60,7.04L22.95,6.93L23.33,6.80L23.74,6.67L24.15,6.54L24.57,6.43L24.98,6.34L25.37,6.30L25.72,6.30L26.02,6.35L26.27,6.46L26.46,6.63L26.61,6.82L26.76,7.01L26.91,7.21L27.05,7.41L27.19,7.62L27.33,7.82L27.46,8.03L27.59,8.24L27.71,8.45L27.83,8.66L27.95,8.88L28.06,9.10L28.17,9.32L28.28,9.54L28.38,9.77L28.48,9.99L28.57,10.22L28.66,10.45L28.71,10.69L28.68,10.96L28.58,11.25L28.40,11.55L28.17,11.87L27.90,12.18L27.59,12.49L27.27,12.78L26.94,13.07L26.64,13.33L26.37,13.58L26.15,13.81L25.99,14.03L25.90,14.22L25.88,14.41L25.89,14.59L25.91,14.77L25.92,14.95L25.93,15.14L25.93,15.32Z" fill="none" stroke="#000" stroke-width="2.8" stroke-linejoin="round"/><circle cx="15.5" cy="15.5" r="4.65" fill="none" stroke="#000" stroke-width="2.8"/></svg>
<div class="a" style="left:101px;top:238.5px;width:2426px;height:2px;background:#cbcbcb;"></div>
<svg class="a" style="left:2536px;top:187.2px;" width="14.5" height="7.8" viewBox="0 0 14.5 7.8"><path d="M0 7.8 L7.25 0 L14.5 7.8 Z" fill="#e0e0e0"/></svg>
<div class="a" style="left:2529px;top:206px;width:28px;height:346.8px;background:#e3e3e3;"></div>
<svg class="a" style="left:2536px;top:1056px;" width="15" height="8.5" viewBox="0 0 15 8.5"><path d="M0 0 L7.5 8.5 L15 0 Z" fill="#e0e0e0"/></svg>
<div class="a" style="left:101px;top:240.5px;width:2426px;height:835.5px;overflow:hidden">
<div class="a" style="left:-101px;top:-240.5px;width:2560px;height:1440px"><div class="a" style="left:100px;top:241px;width:2427px;height:63px;background:#bacdff;"></div><div class="a" style="left:135px;top:256px;width:30px;height:30px;background:#4e79e8;border-radius:6px;"></div><svg class="a" style="left:135px;top:256px;" width="30" height="30" viewBox="0 0 30 30"><path d="M7.5 15.2L12.6 20.2L22.7 10" fill="none" stroke="#fff" stroke-width="4.4" stroke-linecap="square" stroke-linejoin="miter"/></svg><div class="t" style="left:213.5px;top:259.78px;font-size:24px;line-height:24px;color:#000;letter-spacing:-0.12px;">OrderID</div><div class="t" style="left:703.3px;top:259.28px;font-size:24px;line-height:24px;color:#000;letter-spacing:-0.79px;">MS_SalesFacts.OrderID</div><svg class="a" style="left:1463.2px;top:260.5px;" width="21.2" height="21.2" viewBox="0 0 21.2 21.2"><g opacity="0.5"><rect x="1.05" y="1.05" width="19.1" height="19.1" rx="4" fill="none" stroke="#000" stroke-width="2.1"/><path d="M6.6 6.7H14.6M10.6 6.7V15.2" fill="none" stroke="#000" stroke-width="2.1"/></g></svg><div class="t" style="left:1495.2px;top:259.28px;font-size:24px;line-height:24px;color:#000;letter-spacing:-0.4px;">Строка</div><div class="a" style="left:1839px;top:246.8px;width:276.4px;height:49.1px;background:#89cbae;border-radius:11px;"></div><div class="t" style="left:1859.6px;top:258.78px;font-size:24px;line-height:24px;color:#000;letter-spacing:-0.4px;">Нет</div><div class="t" style="left:143px;top:324.58px;font-size:24px;line-height:24px;color:#000;">2</div><div class="t" style="left:213.5px;top:324.58px;font-size:24px;line-height:24px;color:#000;letter-spacing:-0.17px;">OrderCount</div><div class="t" style="left:703.3px;top:324.08px;font-size:24px;line-height:24px;color:#000;letter-spacing:-0.79px;">MS_SalesFacts.OrderID</div><svg class="a" style="left:1463.2px;top:325.3px;" width="21.2" height="21.2" viewBox="0 0 21.2 21.2"><g opacity="0.5"><rect x="1.05" y="1.05" width="19.1" height="19.1" rx="4" fill="none" stroke="#000" stroke-width="2.1"/><path d="M6.6 6.7H14.6M10.6 6.7V15.2" fill="none" stroke="#000" stroke-width="2.1"/></g></svg><div class="t" style="left:1495.2px;top:324.08px;font-size:24px;line-height:24px;color:#000;letter-spacing:-0.4px;">Строка</div><div class="a" style="left:1839px;top:311.6px;width:276.4px;height:49.1px;background:#bacdff;border-radius:11px;"></div><div class="t" style="left:1859.6px;top:323.58px;font-size:24px;line-height:24px;color:#000;letter-spacing:-0.26px;">Количество уникал...</div><div class="a" style="left:100px;top:369px;width:2427px;height:65px;background:#bacdff;"></div><div class="a" style="left:100px;top:434px;width:2427px;height:1px;background:rgba(255,255,255,0.12);"></div><div class="a" style="left:135px;top:386px;width:30px;height:30px;background:#4e79e8;border-radius:6px;"></div><svg class="a" style="left:135px;top:386px;" width="30" height="30" viewBox="0 0 30 30"><path d="M7.5 15.2L12.6 20.2L22.7 10" fill="none" stroke="#fff" stroke-width="4.4" stroke-linecap="square" stroke-linejoin="miter"/></svg><div class="t" style="left:213.5px;top:389.38px;font-size:24px;line-height:24px;color:#000;letter-spacing:-0.11px;">ClientID</div><div class="t" style="left:703.3px;top:388.88px;font-size:24px;line-height:24px;color:#000;letter-spacing:-0.75px;">MS_SalesFacts.ClientID</div><svg class="a" style="left:1463.2px;top:390.1px;" width="21.2" height="21.2" viewBox="0 0 21.2 21.2"><g opacity="0.5"><rect x="1.05" y="1.05" width="19.1" height="19.1" rx="4" fill="none" stroke="#000" stroke-width="2.1"/><path d="M6.6 6.7H14.6M10.6 6.7V15.2" fill="none" stroke="#000" stroke-width="2.1"/></g></svg><div class="t" style="left:1495.2px;top:388.88px;font-size:24px;line-height:24px;color:#000;letter-spacing:-0.4px;">Строка</div><div class="a" style="left:1839px;top:376.4px;width:276.4px;height:49.1px;background:#89cbae;border-radius:11px;"></div><div class="t" style="left:1859.6px;top:388.38px;font-size:24px;line-height:24px;color:#000;letter-spacing:-0.4px;">Нет</div><div class="a" style="left:100px;top:434px;width:2427px;height:64px;background:#bacdff;"></div><div class="a" style="left:135px;top:450px;width:30px;height:30px;background:#4e79e8;border-radius:6px;"></div><svg class="a" style="left:135px;top:450px;" width="30" height="30" viewBox="0 0 30 30"><path d="M7.5 15.2L12.6 20.2L22.7 10" fill="none" stroke="#fff" stroke-width="4.4" stroke-linecap="square" stroke-linejoin="miter"/></svg><div class="t" style="left:212.5px;top:454.18px;font-size:24px;line-height:24px;color:#000;letter-spacing:0.16px;">ProductID</div><div class="t" style="left:703.3px;top:453.68px;font-size:24px;line-height:24px;color:#000;letter-spacing:-0.64px;">MS_SalesFacts.ProductID</div><svg class="a" style="left:1463.2px;top:454.9px;" width="21.2" height="21.2" viewBox="0 0 21.2 21.2"><g opacity="0.5"><rect x="1.05" y="1.05" width="19.1" height="19.1" rx="4" fill="none" stroke="#000" stroke-width="2.1"/><path d="M6.6 6.7H14.6M10.6 6.7V15.2" fill="none" stroke="#000" stroke-width="2.1"/></g></svg><div class="t" style="left:1495.2px;top:453.68px;font-size:24px;line-height:24px;color:#000;letter-spacing:-0.4px;">Строка</div><div class="a" style="left:1839px;top:441.2px;width:276.4px;height:49.1px;background:#89cbae;border-radius:11px;"></div><div class="t" style="left:1859.6px;top:453.18px;font-size:24px;line-height:24px;color:#000;letter-spacing:-0.4px;">Нет</div><div class="t" style="left:143px;top:518.98px;font-size:24px;line-height:24px;color:#000;">5</div><div class="t" style="left:213.5px;top:518.98px;font-size:24px;line-height:24px;color:#000;letter-spacing:-0.4px;">ShopID</div><div class="t" style="left:703.3px;top:518.48px;font-size:24px;line-height:24px;color:#000;letter-spacing:-0.78px;">MS_SalesFacts.ShopID</div><svg class="a" style="left:1463.2px;top:519.7px;" width="21.2" height="21.2" viewBox="0 0 21.2 21.2"><g opacity="0.5"><rect x="1.05" y="1.05" width="19.1" height="19.1" rx="4" fill="none" stroke="#000" stroke-width="2.1"/><path d="M6.6 6.7H14.6M10.6 6.7V15.2" fill="none" stroke="#000" stroke-width="2.1"/></g></svg><div class="t" style="left:1495.2px;top:518.48px;font-size:24px;line-height:24px;color:#000;letter-spacing:-0.4px;">Строка</div><div class="a" style="left:1839px;top:506px;width:276.4px;height:49.1px;background:#b2e9ad;border-radius:11px;"></div><div class="t" style="left:1859.6px;top:517.98px;font-size:24px;line-height:24px;color:#000;letter-spacing:-0.4px;">Нет</div><div class="t" style="left:143px;top:583.78px;font-size:24px;line-height:24px;color:#000;">6</div><div class="t" style="left:213.5px;top:583.78px;font-size:24px;line-height:24px;color:#000;letter-spacing:0.15px;">OrderDatetime</div><div class="t" style="left:703.3px;top:583.28px;font-size:24px;line-height:24px;color:#000;letter-spacing:-0.51px;">MS_SalesFacts.OrderDatetime</div><svg class="a" style="left:1463.2px;top:584.5px;" width="21.2" height="21.2" viewBox="0 0 21.2 21.2"><g opacity="0.5"><rect x="1.05" y="2.6" width="19.1" height="17" rx="4.2" fill="none" stroke="#000" stroke-width="2.1"/><path d="M1.5 8.7H19.7M6.8 0.2V5.5M15.6 0.2V5.5" fill="none" stroke="#000" stroke-width="2.1"/></g></svg><div class="t" style="left:1496.2px;top:583.28px;font-size:24px;line-height:24px;color:#000;letter-spacing:-0.35px;">Дата и время</div><div class="a" style="left:1839px;top:570.8px;width:276.4px;height:49.1px;background:#b2e9ad;border-radius:11px;"></div><div class="t" style="left:1859.6px;top:582.78px;font-size:24px;line-height:24px;color:#000;letter-spacing:-0.4px;">Нет</div><div class="a" style="left:100px;top:628px;width:2427px;height:65px;background:#bacdff;"></div><div class="a" style="left:100px;top:693px;width:2427px;height:1px;background:rgba(255,255,255,0.12);"></div><div class="a" style="left:135px;top:645px;width:30px;height:30px;background:#4e79e8;border-radius:6px;"></div><svg class="a" style="left:135px;top:645px;" width="30" height="30" viewBox="0 0 30 30"><path d="M7.5 15.2L12.6 20.2L22.7 10" fill="none" stroke="#fff" stroke-width="4.4" stroke-linecap="square" stroke-linejoin="miter"/></svg><div class="t" style="left:212.5px;top:648.58px;font-size:24px;line-height:24px;color:#000;letter-spacing:0.12px;">DeliveryDatetime</div><div class="t" style="left:703.3px;top:648.08px;font-size:24px;line-height:24px;color:#000;letter-spacing:-0.45px;">MS_SalesFacts.DeliveryDatetime</div><svg class="a" style="left:1463.2px;top:649.3px;" width="21.2" height="21.2" viewBox="0 0 21.2 21.2"><g opacity="0.5"><rect x="1.05" y="2.6" width="19.1" height="17" rx="4.2" fill="none" stroke="#000" stroke-width="2.1"/><path d="M1.5 8.7H19.7M6.8 0.2V5.5M15.6 0.2V5.5" fill="none" stroke="#000" stroke-width="2.1"/></g></svg><div class="t" style="left:1496.2px;top:648.08px;font-size:24px;line-height:24px;color:#000;letter-spacing:-0.35px;">Дата и время</div><div class="a" style="left:1839px;top:635.6px;width:276.4px;height:49.1px;background:#89cbae;border-radius:11px;"></div><div class="t" style="left:1859.6px;top:647.58px;font-size:24px;line-height:24px;color:#000;letter-spacing:-0.4px;">Нет</div><div class="a" style="left:100px;top:693px;width:2427px;height:65px;background:#bacdff;"></div><div class="a" style="left:135px;top:710px;width:30px;height:30px;background:#4e79e8;border-radius:6px;"></div><svg class="a" style="left:135px;top:710px;" width="30" height="30" viewBox="0 0 30 30"><path d="M7.5 15.2L12.6 20.2L22.7 10" fill="none" stroke="#fff" stroke-width="4.4" stroke-linecap="square" stroke-linejoin="miter"/></svg><div class="t" style="left:212.5px;top:713.38px;font-size:24px;line-height:24px;color:#000;letter-spacing:-0.07px;">Discount</div><div class="t" style="left:703.3px;top:712.88px;font-size:24px;line-height:24px;color:#000;letter-spacing:-0.68px;">MS_SalesFacts.Discount</div><svg class="a" style="left:1463.2px;top:714.1px;" width="21.2" height="21.2" viewBox="0 0 21.2 21.2"><g opacity="0.5"><path d="M7.6 3L5 20.5M15.6 3L13 20.5M2.5 8.2H20M1 15.3H18.6" fill="none" stroke="#000" stroke-width="2.2" stroke-linecap="round"/></g></svg><div class="t" style="left:1496.2px;top:712.88px;font-size:24px;line-height:24px;color:#000;letter-spacing:-0.11px;">Дробное число</div><div class="a" style="left:1839px;top:700.4px;width:276.4px;height:49.1px;background:#89cbae;border-radius:11px;"></div><div class="t" style="left:1859.6px;top:712.38px;font-size:24px;line-height:24px;color:#000;letter-spacing:-0.4px;">Нет</div><div class="t" style="left:143px;top:778.18px;font-size:24px;line-height:24px;color:#000;">9</div><div class="t" style="left:212.5px;top:778.18px;font-size:24px;line-height:24px;color:#000;letter-spacing:0.06px;">ProductCount</div><div class="t" style="left:703.3px;top:777.68px;font-size:24px;line-height:24px;color:#000;letter-spacing:-0.57px;">MS_SalesFacts.ProductCount</div><svg class="a" style="left:1463.2px;top:778.9px;" width="21.2" height="21.2" viewBox="0 0 21.2 21.2"><g opacity="0.5"><path d="M7.6 3L5 20.5M15.6 3L13 20.5M2.5 8.2H20M1 15.3H18.6" fill="none" stroke="#000" stroke-width="2.2" stroke-linecap="round"/></g></svg><div class="t" style="left:1494.2px;top:777.68px;font-size:24px;line-height:24px;color:#000;letter-spacing:-0.34px;">Целое число</div><div class="a" style="left:1839px;top:765.2px;width:276.4px;height:49.1px;background:#b2e9ad;border-radius:11px;"></div><div class="t" style="left:1859.6px;top:777.18px;font-size:24px;line-height:24px;color:#000;letter-spacing:-0.4px;">Нет</div><div class="t" style="left:135.5px;top:842.98px;font-size:24px;line-height:24px;color:#000;">10</div><div class="t" style="left:212.5px;top:842.98px;font-size:24px;line-height:24px;color:#000;letter-spacing:-0.08px;">DeliveryAddressCoord</div><div class="t" style="left:703.3px;top:842.48px;font-size:24px;line-height:24px;color:#000;letter-spacing:-0.47px;">MS_SalesFacts.DeliveryAddressCoord</div><svg class="a" style="left:1463.2px;top:843.7px;" width="21.2" height="21.2" viewBox="0 0 21.2 21.2"><g opacity="0.5"><rect x="1.05" y="1.05" width="19.1" height="19.1" rx="4" fill="none" stroke="#000" stroke-width="2.1"/><circle cx="13.2" cy="8.6" r="3.6" fill="#000"/><circle cx="6" cy="12.6" r="2" fill="#000"/><path d="M1.5 4.5L12 11M13.5 8L4 20" fill="none" stroke="#000" stroke-width="2"/></g></svg><div class="t" style="left:1494.2px;top:842.48px;font-size:24px;line-height:24px;color:#000;letter-spacing:-0.07px;">Геоточка</div><div class="a" style="left:1839px;top:830px;width:276.4px;height:49.1px;background:#b2e9ad;border-radius:11px;"></div><div class="t" style="left:1859.6px;top:841.98px;font-size:24px;line-height:24px;color:#000;letter-spacing:-0.4px;">Нет</div><div class="t" style="left:136.5px;top:907.78px;font-size:24px;line-height:24px;color:#000;">11</div><div class="t" style="left:212.5px;top:907.78px;font-size:24px;line-height:24px;color:#000;letter-spacing:0.08px;">DeliveryType</div><div class="t" style="left:703.3px;top:907.28px;font-size:24px;line-height:24px;color:#000;letter-spacing:-0.56px;">MS_SalesFacts.DeliveryType</div><svg class="a" style="left:1463.2px;top:908.5px;" width="21.2" height="21.2" viewBox="0 0 21.2 21.2"><g opacity="0.5"><rect x="1.05" y="1.05" width="19.1" height="19.1" rx="4" fill="none" stroke="#000" stroke-width="2.1"/><path d="M6.6 6.7H14.6M10.6 6.7V15.2" fill="none" stroke="#000" stroke-width="2.1"/></g></svg><div class="t" style="left:1495.2px;top:907.28px;font-size:24px;line-height:24px;color:#000;letter-spacing:-0.4px;">Строка</div><div class="a" style="left:1839px;top:894.8px;width:276.4px;height:49.1px;background:#b2e9ad;border-radius:11px;"></div><div class="t" style="left:1859.6px;top:906.78px;font-size:24px;line-height:24px;color:#000;letter-spacing:-0.4px;">Нет</div><div class="t" style="left:136px;top:972.58px;font-size:24px;line-height:24px;color:#000;">12</div><div class="t" style="left:212.5px;top:972.58px;font-size:24px;line-height:24px;color:#000;letter-spacing:-0.35px;">PaymentType</div><div class="t" style="left:703.3px;top:972.08px;font-size:24px;line-height:24px;color:#000;letter-spacing:-0.76px;">MS_SalesFacts.PaymentType</div><svg class="a" style="left:1463.2px;top:973.3px;" width="21.2" height="21.2" viewBox="0 0 21.2 21.2"><g opacity="0.5"><rect x="1.05" y="1.05" width="19.1" height="19.1" rx="4" fill="none" stroke="#000" stroke-width="2.1"/><path d="M6.6 6.7H14.6M10.6 6.7V15.2" fill="none" stroke="#000" stroke-width="2.1"/></g></svg><div class="t" style="left:1495.2px;top:972.08px;font-size:24px;line-height:24px;color:#000;letter-spacing:-0.4px;">Строка</div><div class="a" style="left:1839px;top:959.6px;width:276.4px;height:49.1px;background:#b2e9ad;border-radius:11px;"></div><div class="t" style="left:1859.6px;top:971.58px;font-size:24px;line-height:24px;color:#000;letter-spacing:-0.4px;">Нет</div><div class="t" style="left:136px;top:1037.38px;font-size:24px;line-height:24px;color:#000;">13</div><div class="t" style="left:212.5px;top:1037.38px;font-size:24px;line-height:24px;color:#000;letter-spacing:0.12px;">Price</div><div class="t" style="left:703.3px;top:1036.88px;font-size:24px;line-height:24px;color:#000;letter-spacing:-0.85px;">MS_SalesFacts.Price</div><svg class="a" style="left:1463.2px;top:1038.1px;" width="21.2" height="21.2" viewBox="0 0 21.2 21.2"><g opacity="0.5"><path d="M7.6 3L5 20.5M15.6 3L13 20.5M2.5 8.2H20M1 15.3H18.6" fill="none" stroke="#000" stroke-width="2.2" stroke-linecap="round"/></g></svg><div class="t" style="left:1494.2px;top:1036.88px;font-size:24px;line-height:24px;color:#000;letter-spacing:-0.34px;">Целое число</div><div class="a" style="left:1839px;top:1024.4px;width:276.4px;height:49.1px;background:#bacdff;border-radius:11px;"></div><div class="t" style="left:1860.6px;top:1036.38px;font-size:24px;line-height:24px;color:#000;letter-spacing:-0.45px;">Сумма</div><div class="a" style="left:198px;top:241px;width:1px;height:63px;background:rgba(255,255,255,0.13);"></div><div class="a" style="left:683px;top:241px;width:1px;height:63px;background:rgba(255,255,255,0.13);"></div><div class="a" style="left:1304px;top:241px;width:1px;height:63px;background:rgba(255,255,255,0.13);"></div><div class="a" style="left:1438px;top:241px;width:1px;height:63px;background:rgba(255,255,255,0.13);"></div><div class="a" style="left:1838px;top:241px;width:1px;height:63px;background:rgba(255,255,255,0.13);"></div><div class="a" style="left:2390px;top:241px;width:1px;height:63px;background:rgba(255,255,255,0.13);"></div><div class="a" style="left:198px;top:369px;width:1px;height:65px;background:rgba(255,255,255,0.13);"></div><div class="a" style="left:683px;top:369px;width:1px;height:65px;background:rgba(255,255,255,0.13);"></div><div class="a" style="left:1304px;top:369px;width:1px;height:65px;background:rgba(255,255,255,0.13);"></div><div class="a" style="left:1438px;top:369px;width:1px;height:65px;background:rgba(255,255,255,0.13);"></div><div class="a" style="left:1838px;top:369px;width:1px;height:65px;background:rgba(255,255,255,0.13);"></div><div class="a" style="left:2390px;top:369px;width:1px;height:65px;background:rgba(255,255,255,0.13);"></div><div class="a" style="left:198px;top:434px;width:1px;height:64px;background:rgba(255,255,255,0.13);"></div><div class="a" style="left:683px;top:434px;width:1px;height:64px;background:rgba(255,255,255,0.13);"></div><div class="a" style="left:1304px;top:434px;width:1px;height:64px;background:rgba(255,255,255,0.13);"></div><div class="a" style="left:1438px;top:434px;width:1px;height:64px;background:rgba(255,255,255,0.13);"></div><div class="a" style="left:1838px;top:434px;width:1px;height:64px;background:rgba(255,255,255,0.13);"></div><div class="a" style="left:2390px;top:434px;width:1px;height:64px;background:rgba(255,255,255,0.13);"></div><div class="a" style="left:198px;top:628px;width:1px;height:65px;background:rgba(255,255,255,0.13);"></div><div class="a" style="left:683px;top:628px;width:1px;height:65px;background:rgba(255,255,255,0.13);"></div><div class="a" style="left:1304px;top:628px;width:1px;height:65px;background:rgba(255,255,255,0.13);"></div><div class="a" style="left:1438px;top:628px;width:1px;height:65px;background:rgba(255,255,255,0.13);"></div><div class="a" style="left:1838px;top:628px;width:1px;height:65px;background:rgba(255,255,255,0.13);"></div><div class="a" style="left:2390px;top:628px;width:1px;height:65px;background:rgba(255,255,255,0.13);"></div><div class="a" style="left:198px;top:693px;width:1px;height:65px;background:rgba(255,255,255,0.13);"></div><div class="a" style="left:683px;top:693px;width:1px;height:65px;background:rgba(255,255,255,0.13);"></div><div class="a" style="left:1304px;top:693px;width:1px;height:65px;background:rgba(255,255,255,0.13);"></div><div class="a" style="left:1438px;top:693px;width:1px;height:65px;background:rgba(255,255,255,0.13);"></div><div class="a" style="left:1838px;top:693px;width:1px;height:65px;background:rgba(255,255,255,0.13);"></div><div class="a" style="left:2390px;top:693px;width:1px;height:65px;background:rgba(255,255,255,0.13);"></div></div>
</div>
<div class="a" style="left:128.2px;top:956.7px;width:2371.3px;height:92.7px;background:#4e79e6;border-radius:16px;"></div>
<div class="t" style="left:163.45px;top:989.64px;font-size:27px;line-height:27px;color:#fff;-webkit-text-stroke:0.9px #fff;letter-spacing:-0.24px;">Выбрано полей — 5</div>
<svg class="a" style="left:513px;top:988.3px;" width="28" height="28.2" viewBox="0 0 28 28.2"><g fill="none" stroke="#fff" stroke-width="2.7" stroke-linecap="round" stroke-linejoin="round"><path d="M3 7H25M10 7V4.8C10 3.5 11 2.5 12.3 2.5H15.7C17 2.5 18 3.5 18 4.8V7"/><path d="M5.5 7L6.6 23.5C6.8 25.5 8.3 27 10.3 27H17.7C19.7 27 21.2 25.5 21.4 23.5L22.5 7"/><path d="M11.3 12V21.5M16.7 12V21.5"/></g></svg>
<div class="t" style="left:555px;top:990.48px;font-size:24px;line-height:24px;color:#fff;letter-spacing:-0.4px;">Удалить</div>
<svg class="a" style="left:701px;top:991.5px;" width="29" height="23.5" viewBox="0 0 29 23"><path d="M4.2 8.6C2.7 10 1.9 11.2 1.9 11.6C1.9 13 6.6 20.6 14.3 20.6C16 20.6 17.5 20.3 18.8 19.7M8.9 3.5C10.5 2.8 12.3 2.5 14.3 2.5C22 2.5 26.7 10.1 26.7 11.6C26.7 12.3 25.7 14.2 23.7 16.3M10.6 9.3C9.9 10 9.5 10.8 9.5 11.6C9.5 14.2 11.6 16.4 14.3 16.4C15.3 16.4 16.2 16.1 16.9 15.6M16.2 7.2C17.6 7.8 18.6 9 19 10.3M3.5 1.5L22.8 20.8" fill="none" stroke="#fff" stroke-width="2.9" stroke-linecap="round" stroke-linejoin="round"/></svg>
<div class="t" style="left:744.6px;top:990.48px;font-size:24px;line-height:24px;color:#fff;letter-spacing:-0.04px;">Скрыть</div>
<svg class="a" style="left:2429.5px;top:994.5px;" width="18" height="18" viewBox="0 0 18 18"><path d="M1.3 1.3L16.7 16.7M16.7 1.3L1.3 16.7" stroke="#fff" stroke-width="2.6" stroke-linecap="round"/></svg>
<div class="a" style="left:101px;top:1076px;width:2456px;height:3.5px;background:#cccccc;"></div>
<div class="a" style="left:101px;top:1079.5px;width:2456px;height:1.5px;background:#c2c2c2;"></div>
<div class="a" style="left:101px;top:1081px;width:2456px;height:356px;background:#f2f2f2;"></div>
<div class="t" style="left:136.1px;top:1110.68px;font-size:24px;line-height:24px;color:#000;-webkit-text-stroke:0.6px #000;letter-spacing:0.78px;">Предпросмотр</div>
<div class="t" style="left:378px;top:1110.68px;font-size:24px;line-height:24px;color:#000;">Количество строк:</div>
<div class="a" style="left:597px;top:1098px;width:148px;height:50.5px;background:transparent;border-radius:12px;border:2px solid #c8c8c8;box-sizing:border-box;"></div>
<div class="t" style="left:612.3px;top:1110.68px;font-size:24px;line-height:24px;color:#000;letter-spacing:0.6px;">10</div>
<div class="t" style="left:761.6px;top:1110.68px;font-size:24px;line-height:24px;color:#555;letter-spacing:-0.76px;">не больше 1 000</div>
<svg class="a" style="left:2367.5px;top:1110.5px;" width="25" height="25" viewBox="0 0 25 25"><path d="M11 3H22V14M3 11V22H14" fill="none" stroke="#000" stroke-width="2.8" stroke-linecap="round" stroke-linejoin="round"/></svg>
<svg class="a" style="left:2425px;top:1111px;" width="29" height="24" viewBox="0 0 29 24"><rect x="2.7" y="2.4" width="23.2" height="19.2" rx="5" fill="none" stroke="#000" stroke-width="2.7"/><path d="M19.4 2.4V21.6" stroke="#000" stroke-width="2.7"/></svg>
<svg class="a" style="left:2489px;top:1114px;" width="18.5" height="18.5" viewBox="0 0 18.5 18.5"><path d="M1.4 1.4L17.1 17.1M17.1 1.4L1.4 17.1" stroke="#000" stroke-width="2.8" stroke-linecap="round"/></svg>
<div class="a" style="left:123px;top:1166px;width:2403px;height:240px;overflow:hidden">
<div class="a" style="left:-123px;top:-1166px;width:2560px;height:1440px"><div class="a" style="left:123px;top:1166px;width:2577px;height:2px;background:#c9c9c9;"></div><div class="a" style="left:123px;top:1226px;width:2577px;height:1px;background:#c6c6c6;"></div><div class="a" style="left:123px;top:1283px;width:2577px;height:1px;background:#c6c6c6;"></div><div class="a" style="left:123px;top:1341px;width:2577px;height:1px;background:#c6c6c6;"></div><div class="a" style="left:123px;top:1398px;width:2577px;height:2px;background:#c6c6c6;"></div><div class="a" style="left:356.6px;top:1168px;width:1px;height:58px;background:rgba(0,0,0,0.018);"></div><div class="a" style="left:521.5px;top:1168px;width:1px;height:58px;background:rgba(0,0,0,0.018);"></div><div class="a" style="left:643.4px;top:1168px;width:1px;height:58px;background:rgba(0,0,0,0.018);"></div><div class="a" style="left:787.8px;top:1168px;width:1px;height:58px;background:rgba(0,0,0,0.018);"></div><div class="a" style="left:901px;top:1168px;width:1px;height:58px;background:rgba(0,0,0,0.018);"></div><div class="a" style="left:1163.7px;top:1168px;width:1px;height:58px;background:rgba(0,0,0,0.018);"></div><div class="a" style="left:1422.5px;top:1168px;width:1px;height:58px;background:rgba(0,0,0,0.018);"></div><div class="a" style="left:1555px;top:1168px;width:1px;height:58px;background:rgba(0,0,0,0.018);"></div><div class="a" style="left:1741px;top:1168px;width:1px;height:58px;background:rgba(0,0,0,0.018);"></div><div class="a" style="left:2099px;top:1168px;width:1px;height:58px;background:rgba(0,0,0,0.018);"></div><div class="a" style="left:2278px;top:1168px;width:1px;height:58px;background:rgba(0,0,0,0.018);"></div><div class="a" style="left:2505.5px;top:1168px;width:1px;height:58px;background:rgba(0,0,0,0.018);"></div><div class="t" style="left:141.55px;top:1184.98px;font-size:24px;line-height:24px;color:#000;-webkit-text-stroke:0.6px #000;transform:scale(1.55,1);transform-origin:0px 0;">#</div><div class="t" style="left:202.1px;top:1184.98px;font-size:24px;line-height:24px;color:#000;-webkit-text-stroke:0.6px #000;letter-spacing:0.27px;">OrderID</div><div class="t" style="left:374.9px;top:1184.98px;font-size:24px;line-height:24px;color:#000;-webkit-text-stroke:0.6px #000;letter-spacing:0.18px;">OrderCount</div><div class="t" style="left:539px;top:1184.98px;font-size:24px;line-height:24px;color:#000;-webkit-text-stroke:0.6px #000;letter-spacing:0.1px;">ClientID</div><div class="t" style="left:659.9px;top:1184.98px;font-size:24px;line-height:24px;color:#000;-webkit-text-stroke:0.6px #000;letter-spacing:0.47px;">ProductID</div><div class="t" style="left:804.6px;top:1184.98px;font-size:24px;line-height:24px;color:#000;-webkit-text-stroke:0.6px #000;letter-spacing:-0.1px;">ShopID</div><div class="t" style="left:919.5px;top:1184.98px;font-size:24px;line-height:24px;color:#000;-webkit-text-stroke:0.6px #000;letter-spacing:0.47px;">OrderDatetime</div><div class="t" style="left:1179.8px;top:1184.98px;font-size:24px;line-height:24px;color:#000;-webkit-text-stroke:0.6px #000;letter-spacing:0.43px;">DeliveryDatetime</div><div class="t" style="left:1440.8px;top:1184.98px;font-size:24px;line-height:24px;color:#000;-webkit-text-stroke:0.6px #000;letter-spacing:0.11px;">Discount</div><div class="t" style="left:1571.8px;top:1184.98px;font-size:24px;line-height:24px;color:#000;-webkit-text-stroke:0.6px #000;letter-spacing:0.35px;">ProductCount</div><div class="t" style="left:1758.2px;top:1184.98px;font-size:24px;line-height:24px;color:#000;-webkit-text-stroke:0.6px #000;letter-spacing:0.18px;">DeliveryAddressCoord</div><div class="t" style="left:2117.9px;top:1184.98px;font-size:24px;line-height:24px;color:#000;-webkit-text-stroke:0.6px #000;letter-spacing:0.34px;">DeliveryType</div><div class="t" style="left:2294.7px;top:1184.98px;font-size:24px;line-height:24px;color:#000;-webkit-text-stroke:0.6px #000;letter-spacing:0.4px;">PaymentType</div><div class="t" style="left:2522.3px;top:1184.98px;font-size:24px;line-height:24px;color:#000;-webkit-text-stroke:0.6px #000;">ProductPrice</div><div class="t" style="left:139.25px;top:1241.68px;font-size:24px;line-height:24px;color:#000;">1</div><div class="t" style="left:201.8px;top:1241.68px;font-size:24px;line-height:24px;color:#000;letter-spacing:-0.48px;">2017-336390</div><div class="t" style="left:373.6px;top:1241.68px;font-size:24px;line-height:24px;color:#000;">1</div><div class="t" style="left:538.7px;top:1241.68px;font-size:24px;line-height:24px;color:#000;">SXs1e</div><div class="t" style="left:660.6px;top:1241.68px;font-size:24px;line-height:24px;color:#000;">prd-19</div><div class="t" style="left:804.3px;top:1241.68px;font-size:24px;line-height:24px;color:#000;">sp-18</div><div class="t" style="left:919.2px;top:1241.68px;font-size:24px;line-height:24px;color:#000;letter-spacing:-0.28px;">2017-06-02T16:23:00</div><div class="t" style="left:1179.5px;top:1241.68px;font-size:24px;line-height:24px;color:#000;letter-spacing:-0.26px;">1970-01-01T00:00:00</div><div class="t" style="left:1441.5px;top:1241.68px;font-size:24px;line-height:24px;color:#000;">0.0</div><div class="t" style="left:1572.5px;top:1241.68px;font-size:24px;line-height:24px;color:#000;">3</div><div class="t" style="left:1757.9px;top:1241.68px;font-size:24px;line-height:24px;color:#000;letter-spacing:-0.07px;">[55.792382134,37.759256095]</div><div class="t" style="left:2118.6px;top:1241.68px;font-size:24px;line-height:24px;color:#000;letter-spacing:-0.32px;">Самовывоз</div><div class="t" style="left:2294.4px;top:1241.68px;font-size:24px;line-height:24px;color:#000;letter-spacing:-0.27px;">Банковская карта</div><div class="t" style="left:2524px;top:1241.68px;font-size:24px;line-height:24px;color:#000;">4500</div><div class="t" style="left:140.25px;top:1299.38px;font-size:24px;line-height:24px;color:#000;">2</div><div class="t" style="left:201.8px;top:1299.38px;font-size:24px;line-height:24px;color:#000;letter-spacing:-0.38px;">2019-476338</div><div class="t" style="left:373.6px;top:1299.38px;font-size:24px;line-height:24px;color:#000;">1</div><div class="t" style="left:538.7px;top:1299.38px;font-size:24px;line-height:24px;color:#000;">mjJE3</div><div class="t" style="left:660.6px;top:1299.38px;font-size:24px;line-height:24px;color:#000;">prd-36</div><div class="t" style="left:804.3px;top:1299.38px;font-size:24px;line-height:24px;color:#000;">sp-15</div><div class="t" style="left:919.2px;top:1299.38px;font-size:24px;line-height:24px;color:#000;letter-spacing:-0.28px;">2019-08-26T08:36:00</div><div class="t" style="left:1179.5px;top:1299.38px;font-size:24px;line-height:24px;color:#000;letter-spacing:-0.26px;">1970-01-01T00:00:00</div><div class="t" style="left:1441.5px;top:1299.38px;font-size:24px;line-height:24px;color:#000;">0.0</div><div class="t" style="left:1572.5px;top:1299.38px;font-size:24px;line-height:24px;color:#000;">3</div><div class="t" style="left:1757.9px;top:1299.38px;font-size:24px;line-height:24px;color:#000;letter-spacing:-0.07px;">[55.861744774,37.587374304]</div><div class="t" style="left:2118.6px;top:1299.38px;font-size:24px;line-height:24px;color:#000;letter-spacing:-0.32px;">Самовывоз</div><div class="t" style="left:2294.4px;top:1299.38px;font-size:24px;line-height:24px;color:#000;letter-spacing:-0.27px;">Банковская карта</div><div class="t" style="left:2523px;top:1299.38px;font-size:24px;line-height:24px;color:#000;">5400</div><div class="t" style="left:140.25px;top:1357.08px;font-size:24px;line-height:24px;color:#000;">3</div><div class="t" style="left:201.8px;top:1357.08px;font-size:24px;line-height:24px;color:#000;letter-spacing:-0.38px;">2018-804353</div><div class="t" style="left:373.6px;top:1357.08px;font-size:24px;line-height:24px;color:#000;">1</div><div class="t" style="left:538.7px;top:1357.08px;font-size:24px;line-height:24px;color:#000;">rjRBE</div><div class="t" style="left:660.6px;top:1357.08px;font-size:24px;line-height:24px;color:#000;">prd-13</div><div class="t" style="left:804.3px;top:1357.08px;font-size:24px;line-height:24px;color:#000;">sp-22</div><div class="t" style="left:919.2px;top:1357.08px;font-size:24px;line-height:24px;color:#000;letter-spacing:-0.28px;">2018-09-25T15:47:00</div><div class="t" style="left:1179.5px;top:1357.08px;font-size:24px;line-height:24px;color:#000;letter-spacing:-0.26px;">1970-01-01T00:00:00</div><div class="t" style="left:1441.5px;top:1357.08px;font-size:24px;line-height:24px;color:#000;">0.0</div><div class="t" style="left:1572.5px;top:1357.08px;font-size:24px;line-height:24px;color:#000;">3</div><div class="t" style="left:1757.9px;top:1357.08px;font-size:24px;line-height:24px;color:#000;">[55.711557694,37.805194165]</div><div class="t" style="left:2118.6px;top:1357.08px;font-size:24px;line-height:24px;color:#000;letter-spacing:-0.32px;">Самовывоз</div><div class="t" style="left:2294.4px;top:1357.08px;font-size:24px;line-height:24px;color:#000;">Наличные</div><div class="t" style="left:2523px;top:1357.08px;font-size:24px;line-height:24px;color:#000;">5900</div></div>
</div>
<div class="a" style="left:2526px;top:1166px;width:31px;height:240px;background:#fff;"></div>
<svg class="a" style="left:2536.3px;top:1180.4px;" width="14.7" height="8.4" viewBox="0 0 14.7 8.4"><path d="M0 8.4 L7.35 0 L14.7 8.4 Z" fill="#e0e0e0"/></svg>
<div class="a" style="left:2529px;top:1199px;width:28px;height:67px;background:#e3e3e3;"></div>
<svg class="a" style="left:2536.3px;top:1383.8px;" width="14.7" height="8.7" viewBox="0 0 14.7 8.7"><path d="M0 0 L7.35 8.7 L14.7 0 Z" fill="#e0e0e0"/></svg>
<div class="a" style="left:123px;top:1406px;width:2434px;height:31px;background:#fff;"></div>
<svg class="a" style="left:135.6px;top:1415.6px;" width="8.6" height="15.4" viewBox="0 0 8.6 15.4"><path d="M8.6 0 L0 7.7 L8.6 15.4 Z" fill="#e0e0e0"/></svg>
<div class="a" style="left:156px;top:1409px;width:35px;height:28px;background:#e3e3e3;"></div>
<svg class="a" style="left:2506px;top:1415.8px;" width="9" height="15.6" viewBox="0 0 9 15.6"><path d="M0 0 L9 7.8 L0 15.6 Z" fill="#e0e0e0"/></svg>
<div class="a" style="left:0px;top:0px;width:2560px;height:3px;background:#cccccc;"></div>
<div class="a" style="left:0px;top:1437px;width:2560px;height:3px;background:#cccccc;"></div>
<div class="a" style="left:0px;top:0px;width:3px;height:1440px;background:#cccccc;"></div>
<div class="a" style="left:2557px;top:0px;width:3px;height:1440px;background:#cccccc;"></div>
</body></html>
